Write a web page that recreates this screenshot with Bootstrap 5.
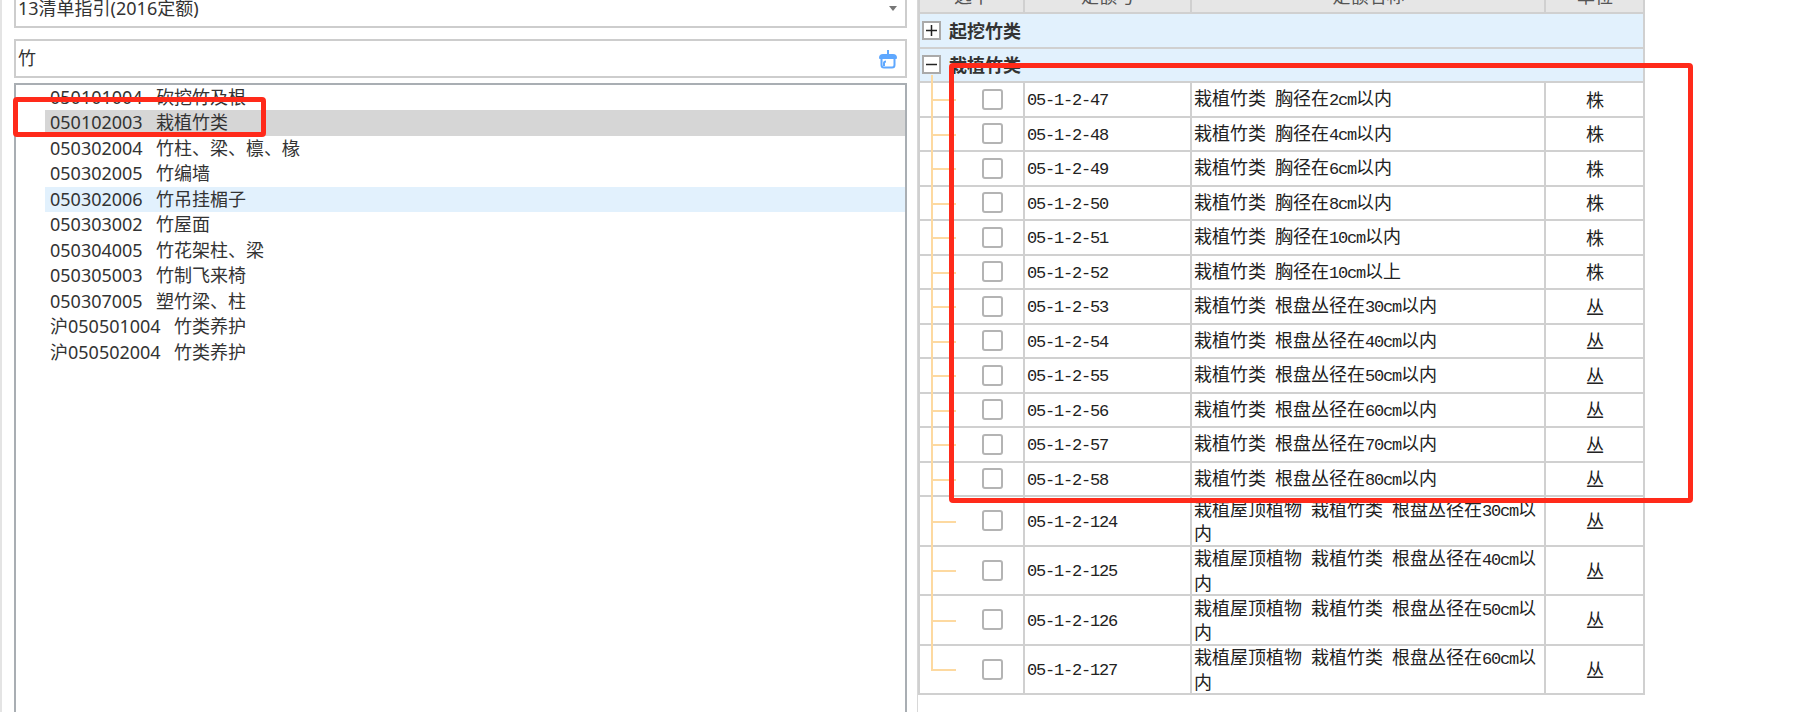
<!DOCTYPE html>
<html lang="zh-CN">
<head>
  <meta charset="UTF-8" />
  <title>清单指引</title>
  <link href="https://cdn.jsdelivr.net/npm/bootstrap@5.3.2/dist/css/bootstrap.min.css" rel="stylesheet"/>
  <style>
    html, body {
      height: 712px;
      overflow: hidden;
      background: #fff;
    }

    body {
      font-family: "Noto Sans", "Noto Sans CJK SC", sans-serif;
      font-size: 18px;
      color: #333;
    }

    .page-wrap {
      position: relative;
      height: 712px;
      overflow: hidden;
      border-left: 2px solid #e4e4e4;
    }

    /* the app is scrolled, its top edge is cut off by the screenshot */
    .scroll-area {
      display: flex;
      height: 760px;
      margin-top: -23px;
    }

    .left-pane {
      width: 905px;
      flex: none;
      padding: 12px 0 0 12px;
      display: flex;
      flex-direction: column;
    }

    .right-pane {
      width: 891px;
      padding-left: 10px;
    }

    .right-inner {
      border-left: 1px solid #d8d8d8;
      height: 100%;
      padding-top: 1px;
    }

    .field-box {
      border: 2px solid #cdcdcd;
      height: 39px;
      padding: 0 8px 0 2px;
      line-height: 35px;
      display: flex;
      align-items: center;
      justify-content: space-between;
    }

    .field-box + .field-box {
      margin-top: 11px;
    }

    .arrow-down {
      width: 0;
      height: 0;
      border-left: 4px solid transparent;
      border-right: 4px solid transparent;
      border-top: 5px solid #777;
    }

    .bill-list {
      margin-top: 4.5px;
      flex: 1;
      border: 2px solid #a9aeb3;
      border-bottom: 0;
      padding: 0 0 0 29px;
      border-radius: 0;
      display: block;
    }

    .bill-item {
      height: 25.5px;
      line-height: 25.5px;
      padding: 0 0 0 5px;
      border: 0;
      border-radius: 0;
      color: #333;
      background: transparent;
      white-space: pre;
      word-spacing: 2px;
    }

    .bill-item.is-current { background: #d6d6d6; }
    .bill-item.is-hover { background: #e2f1fd; }

    .quota-table {
      --bs-border-width: 2px;
      --bs-table-border-color: #d0d0d0;
      --bs-table-bg: #fff;
      width: 725px;
      table-layout: fixed;
      margin: 0;
      color: #222;
      line-height: 21.5px;
      font-family: "Noto Sans CJK SC", sans-serif;
    }

    .quota-table > :not(caption) > * > * {
      padding: 0 1px 0 2px;
      vertical-align: middle;
      color: #222;
    }

    .quota-table thead { --bs-table-bg: #e6e6e6; }
    .quota-table thead th {
      height: 34px;
      font-weight: 400;
      text-align: center;
      color: #555;
    }

    .group-row { --bs-table-bg: #e2f1fd; }
    .group-row td {
      height: 34.5px;
      font-weight: 700;
      position: relative;
    }

    .group-label {
      display: flex;
      align-items: center;
      gap: 8px;
      color: #333;
    }

    .expander {
      width: 19px;
      height: 19px;
      border: 2px solid #aaa;
      background: #fff;
      display: flex;
      align-items: center;
      justify-content: center;
    }

    .group-open td::after {
      content: "";
      position: absolute;
      left: 11px;
      top: 26px;
      bottom: -1px;
      width: 2px;
      background: #fdd9a0;
    }

    .quota-row td { height: 34.5px; }
    .quota-row.tall td { height: 49.5px; }

    .check-cell {
      position: relative;
    }

    .check-cell::before {
      content: "";
      position: absolute;
      left: 11px;
      top: -1px;
      bottom: -1px;
      width: 2px;
      background: #fdd9a0;
    }

    .check-cell::after {
      content: "";
      position: absolute;
      left: 11px;
      top: 50%;
      width: 25px;
      height: 2px;
      background: #fdd9a0;
    }

    .quota-row.last .check-cell::before {
      bottom: 50%;
    }

    .fake-check {
      display: block;
      width: 21px;
      height: 21px;
      margin-left: 60px;
      border: 2px solid #b4b4b4;
      border-radius: 3px;
      background: #fff;
    }

    .ltn {
      font-family: "Liberation Mono", monospace;
      font-size: 17px;
      letter-spacing: -1.2px;
    }

    .unit-cell { text-align: center; }

    .red-mark {
      position: absolute;
      border: 5px solid #ff2a1a;
      border-radius: 4px;
      pointer-events: none;
    }

    .red-mark.on-list {
      left: 11px;
      top: 97px;
      width: 253px;
      height: 40px;
    }

    .red-mark.on-table {
      left: 947px;
      top: 63px;
      width: 744px;
      height: 440px;
    }
  </style>
</head>
<body>
  <div class="page-wrap">
    <div class="scroll-area">
      <div class="left-pane">
        <div class="field-box">
          <span>13清单指引(2016定额)</span>
          <span class="arrow-down"></span>
        </div>
        <div class="field-box">
          <span>竹</span>
          <svg width="18" height="20" viewBox="0 0 18 20" fill="none" stroke="#5fa8ff" stroke-width="2" stroke-linejoin="round">
            <path d="M9 1v5"/>
            <path d="M1 9c0-2 1-3 3-3h10c2 0 3 1 3 3z" fill="#5fa8ff"/>
            <path d="M2.500 9v7c0 1.500 1 2.500 2.500 2.500h8c1.500 0 2.500-1 2.500-2.500V9"/>
            <path d="M5 17v-3c0-1 1-1.500 2-1.500"/>
          </svg>
        </div>
        <div class="list-group bill-list" id="bill-list"></div>
      </div>

      <div class="right-pane">
        <div class="right-inner">
          <table class="table table-bordered quota-table">
            <colgroup>
              <col style="width: 105px" />
              <col style="width: 167px" />
              <col style="width: 354px" />
              <col style="width: 99px" />
            </colgroup>
            <thead>
              <tr>
                <th>选中</th>
                <th>定额号</th>
                <th>定额名称</th>
                <th>单位</th>
              </tr>
            </thead>
            <tbody id="quota-body">
              <tr class="group-row">
                <td colspan="4">
                  <div class="group-label">
                    <span class="expander">
                      <svg width="13" height="13" viewBox="0 0 13 13" stroke="#222" stroke-width="1.500"><path d="M1 6.500h11M6.500 1v11"/></svg>
                    </span>
                    起挖竹类
                  </div>
                </td>
              </tr>
              <tr class="group-row group-open">
                <td colspan="4">
                  <div class="group-label">
                    <span class="expander">
                      <svg width="13" height="13" viewBox="0 0 13 13" stroke="#222" stroke-width="1.500"><path d="M1 6.500h11"/></svg>
                    </span>
                    栽植竹类
                  </div>
                </td>
              </tr>
            </tbody>
          </table>
        </div>
      </div>
    </div>

    <div class="red-mark on-list"></div>
    <div class="red-mark on-table"></div>
  </div>

  <script src="https://cdn.jsdelivr.net/npm/bootstrap@5.3.2/dist/js/bootstrap.bundle.min.js"></script>
  <script>
    const bills = [
      "050101004  砍挖竹及根",
      "050102003  栽植竹类",
      "050302004  竹柱、梁、檩、椽",
      "050302005  竹编墙",
      "050302006  竹吊挂楣子",
      "050303002  竹屋面",
      "050304005  竹花架柱、梁",
      "050305003  竹制飞来椅",
      "050307005  塑竹梁、柱",
      "沪050501004  竹类养护",
      "沪050502004  竹类养护"
    ];

    const quotas = [
      ["47", "栽植竹类 胸径在2cm以内", "株"],
      ["48", "栽植竹类 胸径在4cm以内", "株"],
      ["49", "栽植竹类 胸径在6cm以内", "株"],
      ["50", "栽植竹类 胸径在8cm以内", "株"],
      ["51", "栽植竹类 胸径在10cm以内", "株"],
      ["52", "栽植竹类 胸径在10cm以上", "株"],
      ["53", "栽植竹类 根盘丛径在30cm以内", "丛"],
      ["54", "栽植竹类 根盘丛径在40cm以内", "丛"],
      ["55", "栽植竹类 根盘丛径在50cm以内", "丛"],
      ["56", "栽植竹类 根盘丛径在60cm以内", "丛"],
      ["57", "栽植竹类 根盘丛径在70cm以内", "丛"],
      ["58", "栽植竹类 根盘丛径在80cm以内", "丛"],
      ["124", "栽植屋顶植物 栽植竹类 根盘丛径在30cm以内", "丛"],
      ["125", "栽植屋顶植物 栽植竹类 根盘丛径在40cm以内", "丛"],
      ["126", "栽植屋顶植物 栽植竹类 根盘丛径在50cm以内", "丛"],
      ["127", "栽植屋顶植物 栽植竹类 根盘丛径在60cm以内", "丛"]
    ];

    // half width digits, latin and spaces use the mono face, like the old bitmap font
    function markLatin(text) {
      return text.replace(/[0-9a-z\- ]+/g, m => `<span class="ltn">${m}</span>`);
    }

    document.getElementById("bill-list").innerHTML = bills.map((b, i) => {
      const cls = i === 1 ? " is-current" : i === 4 ? " is-hover" : "";
      return `<div class="list-group-item bill-item${cls}">${b}</div>`;
    }).join("");

    document.getElementById("quota-body").insertAdjacentHTML("beforeend", quotas.map((q, i) => {
      const tall = q[1].startsWith("栽植屋顶") ? " tall" : "";
      const last = i === quotas.length - 1 ? " last" : "";
      return `
        <tr class="quota-row${tall}${last}">
          <td class="check-cell"><span class="fake-check"></span></td>
          <td><span class="ltn">05-1-2-${q[0]}</span></td>
          <td>${markLatin(q[1])}</td>
          <td class="unit-cell">${q[2]}</td>
        </tr>`;
    }).join(""));
  </script>
</body>
</html>
